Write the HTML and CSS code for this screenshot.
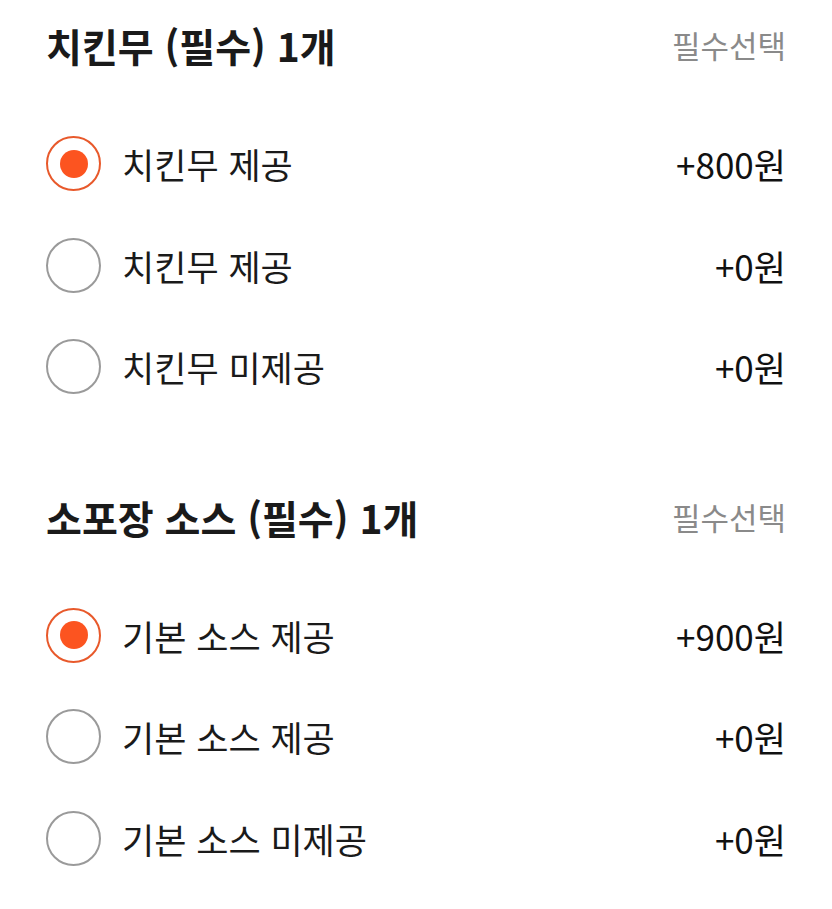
FILE: index.html
```html
<!DOCTYPE html>
<html lang="ko">
<head>
<meta charset="utf-8">
<link rel="stylesheet" href="styles.css">
</head>
<body>
<div class="page">
  <section class="group">
    <div class="group-head">
      <h2 class="group-title">치킨무 (필수) 1개</h2>
      <span class="group-tag">필수선택</span>
    </div>
    <ul class="options">
      <li class="option">
        <span class="radio checked"></span>
        <span class="option-name">치킨무 제공</span>
        <span class="option-price">+800원</span>
      </li>
      <li class="option">
        <span class="radio"></span>
        <span class="option-name">치킨무 제공</span>
        <span class="option-price">+0원</span>
      </li>
      <li class="option">
        <span class="radio"></span>
        <span class="option-name">치킨무 미제공</span>
        <span class="option-price">+0원</span>
      </li>
    </ul>
  </section>
  <section class="group">
    <div class="group-head">
      <h2 class="group-title">소포장 소스 (필수) 1개</h2>
      <span class="group-tag">필수선택</span>
    </div>
    <ul class="options">
      <li class="option">
        <span class="radio checked"></span>
        <span class="option-name">기본 소스 제공</span>
        <span class="option-price">+900원</span>
      </li>
      <li class="option">
        <span class="radio"></span>
        <span class="option-name">기본 소스 제공</span>
        <span class="option-price">+0원</span>
      </li>
      <li class="option">
        <span class="radio"></span>
        <span class="option-name">기본 소스 미제공</span>
        <span class="option-price">+0원</span>
      </li>
    </ul>
  </section>
</div>
</body>
</html>
```

FILE: styles.css
```css
* { box-sizing: border-box; }
html, body { margin: 0; padding: 0; background: #ffffff; }
body {
  font-family: "Noto Sans CJK KR", "Noto Sans", sans-serif;
  color: #1a1a1a;
}
.page {
  padding: 20px 46px 0 46px;
  display: flex;
  flex-direction: column;
  gap: 74px;
}
.group-head {
  display: flex;
  align-items: center;
  justify-content: space-between;
  height: 50px;
}
.group-title {
  margin: 0;
  font-size: 39px;
  font-weight: 700;
  line-height: 50px;
  color: #1a1a1a;
}
.group-tag {
  font-size: 31px;
  line-height: 50px;
  color: #8a8a8a;
  font-weight: 400;
}
.options {
  list-style: none;
  margin: 43px 0 0;
  padding: 0;
}
.option {
  display: flex;
  align-items: center;
  height: 101.5px;
}
.radio {
  width: 55px;
  height: 55px;
  flex: none;
  border-radius: 50%;
  border: 2px solid #9a9a9a;
  display: flex;
  align-items: center;
  justify-content: center;
}
.radio.checked { border-color: #e8592b; }
.radio.checked::after {
  content: "";
  width: 28px;
  height: 28px;
  border-radius: 50%;
  background: #fc5420;
}
.option-name {
  margin-left: 21px;
  font-size: 35px;
  flex: 1;
  color: #1a1a1a;
}
.option-price {
  font-size: 35px;
  font-weight: 400;
  color: #111111;
}
```
